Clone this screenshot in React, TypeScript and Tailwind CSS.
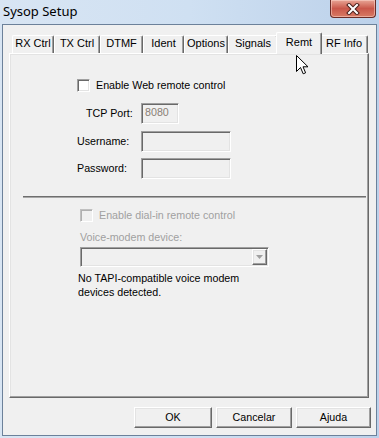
import React from "react";

const raised =
  "border border-t-white border-l-white border-r-[#696969] border-b-[#696969] shadow-[inset_-1px_-1px_0_#a0a0a0,inset_1px_1px_0_#e3e3e3]";
const sunken =
  "border border-t-[#a0a0a0] border-l-[#a0a0a0] border-r-white border-b-white shadow-[inset_1px_1px_0_#696969,inset_-1px_-1px_0_#e3e3e3]";

function Tab({ label, w, selected }: { label: string; w: string; selected?: boolean }) {
  if (selected) {
    return (
      <div
        className={`relative z-10 -mx-[2px] -mb-[1px] h-[22px] ${w} flex items-start justify-center pt-[1px] bg-[#f0f0f0] border-t border-l border-r border-t-white border-l-white border-r-[#696969] rounded-t-[2px] shadow-[inset_-1px_0_0_#a0a0a0]`}
      >
        {label}
      </div>
    );
  }
  return (
    <div
      className={`h-[18px] ${w} flex items-start justify-center pt-0 leading-[15px] bg-[#f0f0f0] border-t border-l border-r border-t-white border-l-white border-r-[#696969] rounded-t-[2px] shadow-[inset_-1px_0_0_#a0a0a0]`}
    >
      {label}
    </div>
  );
}

function Checkbox({ disabled }: { disabled?: boolean }) {
  return (
    <div
      className={`w-[13px] h-[13px] shrink-0 ${
        disabled
          ? "bg-[#f0f0f0] border border-t-[#c0c0c0] border-l-[#c0c0c0] border-r-white border-b-white shadow-[inset_1px_1px_0_#b0b0b0]"
          : "bg-white " + sunken
      }`}
    />
  );
}

export default function App() {
  return (
    <div
      className="relative w-[379px] h-[438px] overflow-hidden flex flex-col bg-gradient-to-r from-[#d8e5f3] via-[#cfe0f2] to-[#bcd1ea] text-[10.7px] text-black"
      style={{ fontFamily: '"Liberation Sans", Arial, sans-serif' }}
    >
      {/* Title bar */}
      <div
        className="h-[24px] shrink-0 pl-[3px] pt-[2px] text-[13px] leading-[18px] text-black"
        style={{ fontFamily: '"Noto Sans", "Open Sans", sans-serif' }}
      >
        Sysop Setup
      </div>

      {/* Close button */}
      <div className="absolute left-[330px] top-0 w-[46px] h-[18px] rounded-b-[4px] border border-t-0 border-[#6b2c26] bg-gradient-to-b from-[#e7a596] via-[#c9574a] to-[#d87a64] shadow-[inset_0_0_0_1px_rgba(255,220,210,0.5)] flex items-center justify-center">
        <svg width="16" height="12" viewBox="0 0 16 12">
          <path d="M4 2 L12 10 M12 2 L4 10" stroke="#4a1f1a" strokeWidth="4" strokeLinecap="square" />
          <path d="M4 2 L12 10 M12 2 L4 10" stroke="#ffffff" strokeWidth="2" strokeLinecap="square" />
        </svg>
      </div>

      {/* Client area */}
      <div className="flex-1 mx-[2px] mb-[2px] border border-[#6c819a] bg-[#f0f0f0] flex flex-col pl-[6px] pt-[7px]">
        {/* Tab strip */}
        <div className="h-[21px] flex items-end pl-[3px] relative z-10 text-[11px]">
          <Tab label="RX Ctrl" w="w-[42px]" />
          <Tab label="TX Ctrl" w="w-[46px]" />
          <Tab label="DTMF" w="w-[43px]" />
          <Tab label="Ident" w="w-[41px]" />
          <Tab label="Options" w="w-[44px]" />
          <Tab label="Signals" w="w-[50px]" />
          <Tab label="Remt" w="w-[46px]" selected />
          <Tab label="RF Info" w="w-[48px]" />
        </div>

        {/* Tab page */}
        <div className={`w-[360px] h-[345px] ${raised} flex flex-col`}>
          <div className="mt-[25px] ml-[67px] flex items-center h-[13px]">
            <Checkbox />
            <span className="ml-[6px] leading-[13px]">Enable Web remote control</span>
          </div>

          <div className="mt-[11px] ml-[67px] flex items-center">
            <span className="w-[64px] pl-[9px] leading-[13px]">TCP Port:</span>
            <div className={`w-[38px] h-[21px] ${sunken} bg-[#f0f0f0] pl-[3px] pt-[2px] leading-[13px] text-[#8a8076]`}>
              8080
            </div>
          </div>

          <div className="mt-[7px] ml-[67px] flex items-center">
            <span className="w-[64px] leading-[13px]">Username:</span>
            <div className={`w-[90px] h-[21px] ${sunken} bg-[#f0f0f0]`} />
          </div>

          <div className="mt-[6px] ml-[67px] flex items-center">
            <span className="w-[64px] leading-[13px]">Password:</span>
            <div className={`w-[90px] h-[21px] ${sunken} bg-[#f0f0f0]`} />
          </div>

          <div className="mt-[17px] ml-[13px] mr-[2px] h-[2px] border-t border-t-[#6e6e6e] border-b border-b-[#a8a8a8]" />

          <div className="mt-[11px] ml-[70px] flex items-center h-[13px]">
            <Checkbox disabled />
            <span className="ml-[6px] leading-[13px] text-[#a0a0a0]">Enable dial-in remote control</span>
          </div>

          <div className="mt-[9px] ml-[70px] leading-[13px] text-[#a0a0a0]">Voice-modem device:</div>

          <div className={`mt-[3px] ml-[70px] w-[189px] h-[20px] ${sunken} bg-[#f0f0f0] flex justify-end items-start pt-[1px] pr-[1px]`}>
            <div className={`w-[15px] h-[16px] ${raised} flex items-center justify-center`}>
              <svg width="7" height="4" viewBox="0 0 7 4">
                <path d="M0 0 H7 L3.5 4 Z" fill="#a0a0a0" />
              </svg>
            </div>
          </div>

          <div className="mt-[4px] ml-[68px] leading-[14px]">
            No TAPI-compatible voice modem
            <br />
            devices detected.
          </div>
        </div>

        {/* Buttons */}
        <div className="mt-[9px] flex justify-end pr-[5px] gap-[4px]">
          <button className={`w-[78px] h-[21px] ${raised} bg-[#f0f0f0] leading-[13px]`}>OK</button>
          <button className={`w-[76px] h-[21px] ${raised} bg-[#f0f0f0] leading-[13px]`}>Cancelar</button>
          <button className={`w-[75px] h-[21px] ${raised} bg-[#f0f0f0] leading-[13px]`}>Ajuda</button>
        </div>
      </div>

      {/* Mouse cursor */}
      <svg className="absolute left-[296px] top-[55px]" width="13" height="20" viewBox="0 0 13 20">
        <path
          d="M0.5 0.5 L0.5 16.5 L4.5 12.5 L7.2 18.8 L9.6 17.8 L7 11.8 L12 11.8 Z"
          fill="#ffffff"
          stroke="#000000"
          strokeWidth="1"
          strokeLinejoin="miter"
        />
      </svg>
    </div>
  );
}
